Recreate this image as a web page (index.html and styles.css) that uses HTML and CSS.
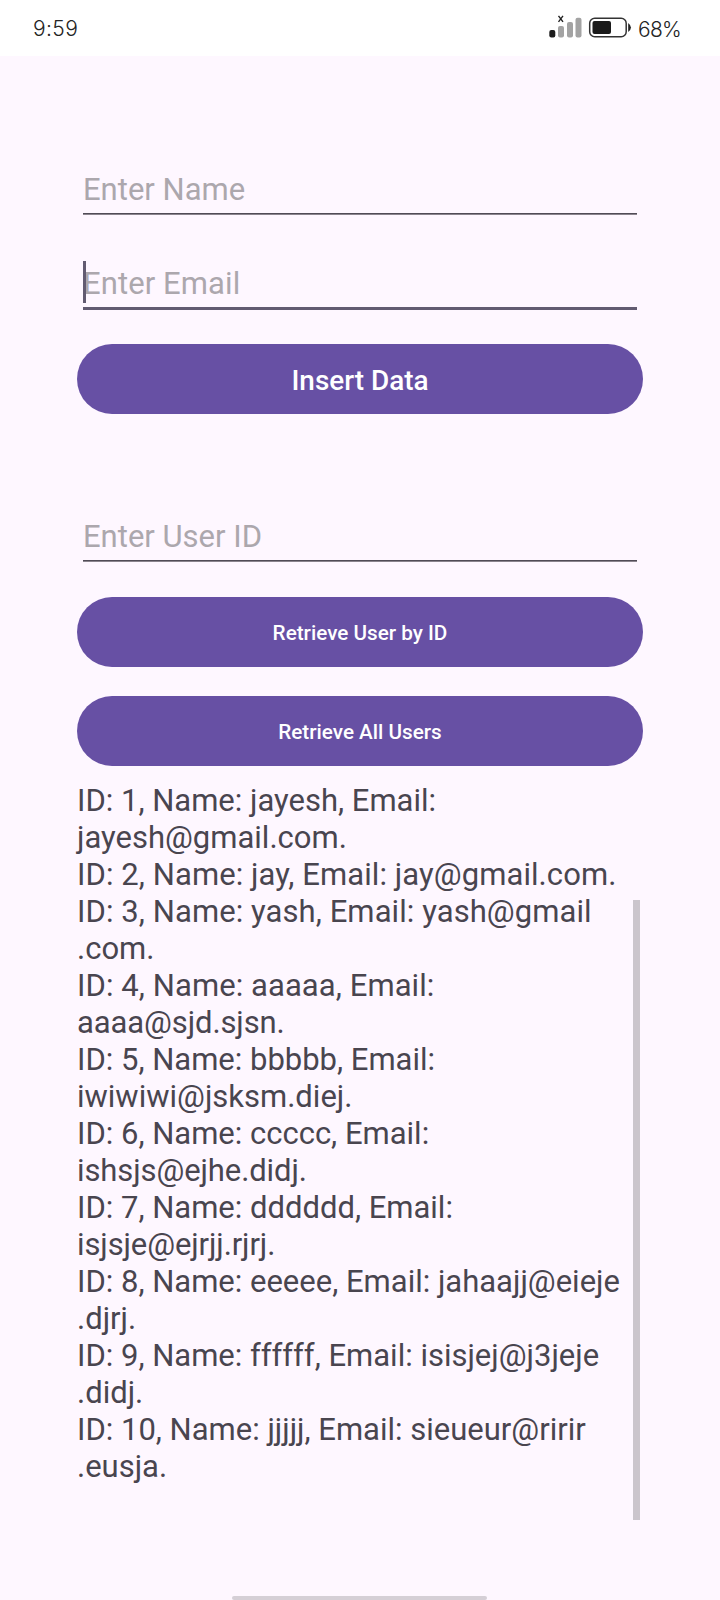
FILE: index.html
```html
<!DOCTYPE html>
<html lang="en"><head><meta charset="utf-8"><title>Users</title><link rel="stylesheet" href="styles.css"></head>
<body>
<header class="status"><span class="time">9:59</span>
<svg class="signals" width="84" height="28" viewBox="0 0 84 28"><path d="M10.500 1.800l4.500 6M15 1.800l-4.500 6" stroke="#222" stroke-width="1.400"/><rect x="1.300" y="16" width="6" height="7.500" rx="2" fill="#1c1c1c"/><g fill="#a3a3a3"><rect x="10" y="12" width="6" height="11.500" rx="2"/><rect x="19" y="8" width="6" height="15.500" rx="2"/><rect x="27.500" y="3.700" width="6" height="19.800" rx="2"/></g><rect x="41.700" y="4.300" width="36.500" height="18.500" rx="5" fill="none" stroke="#333" stroke-width="1.500"/><rect x="44.500" y="7" width="18.500" height="13" rx="2" fill="#1a1a1a"/><path d="M80.200 9q5.500 4.500 0 9z" fill="#222"/></svg>
<span class="percent">68%</span></header>
<main class="screen">
<div class="field name">Enter Name</div>
<div class="field email"><i class="caret"></i>Enter Email</div>
<button class="button insert">Insert Data</button>
<div class="field user-id">Enter User ID</div>
<button class="button by-id">Retrieve User by ID</button>
<button class="button all">Retrieve All Users</button>
<section class="results"><p class="list">ID: 1, Name: jayesh, Email:
jayesh@gmail.com.
<span class="wide">ID: 2, Name: jay, Email: jay@gmail.com.
ID: 3, Name: yash, Email: yash@gmail</span>
.com.
<span class="wide">ID: 4, Name: aaaaa, Email:</span>
<span class="tight">aaaa@sjd.sjsn.</span>
ID: 5, Name: bbbbb, Email:
iwiwiwi@jsksm.diej.
ID: 6, Name: ccccc, Email:
<span class="tight">ishsjs@ejhe.didj.</span>
ID: 7, Name: dddddd, Email:
<span class="tight">isjsje@ejrjj.rjrj.</span>
ID: 8, Name: eeeee, Email: jahaajj@eieje
.djrj.
ID: 9, Name: ffffff, Email: isisjej@j3jeje
.didj.
ID: 10, Name: jjjjj, Email: sieueur@ririr
.eusja.</p><div class="scrollbar"></div></section>
</main><footer class="home"></footer>
</body></html>
```
FILE: styles.css
```css
* { box-sizing: border-box; }
body { margin: 0; height: 1600px; display: flex; flex-direction: column; background: #fef7ff; font-family: Roboto, sans-serif; overflow: hidden; }
.status { height: 56px; flex: none; display: flex; align-items: flex-start; background: #fff; color: #242424; font: 300 21px/26px Inter, sans-serif; padding: 16px 0 0 33px; }
.time { letter-spacing: .4px; }
.signals { flex: none; margin: -2px 6px 0 auto; }
.percent { flex: none; width: 82px; padding-top: 1px; letter-spacing: -.7px; }
.screen { flex: 1; padding: 104px 77px 0; display: flex; flex-direction: column; }
.field { position: relative; height: 55px; flex: none; margin: 0 6px; padding-bottom: 2px; background: linear-gradient(#514c56 50%, #8b858e 50%) bottom / 100% 2px no-repeat; font-size: 31px; line-height: 59px; color: #aca7ad; }
.email { margin-top: 40px; line-height: 57px; background: none; border-bottom: 3px solid #625b71; letter-spacing: .1px; }
.caret { position: absolute; left: 0; top: 6px; width: 3px; height: 42px; background: #625b71; }
.button { height: 70px; flex: none; border: 0; border-radius: 35px; background: #6750a4; color: #fff; font: 500 20.7px Roboto, sans-serif; padding: 2px 0 0; }
.insert { margin-top: 34px; font-size: 27.9px; padding-top: 3px; }
.user-id { margin-top: 93px; }
.by-id { margin-top: 35px; }
.all { margin-top: 29px; }
.results { display: flex; justify-content: space-between; margin-top: 16px; height: 738px; padding-right: 3px; }
.list { margin: 0; white-space: pre; font-size: 31px; line-height: 37px; color: #49454f; }
.wide { letter-spacing: .08px; }
.tight { letter-spacing: -.1px; }
.scrollbar { width: 7px; height: 620px; align-self: flex-end; background: #cbc5cc; }
.home { width: 255px; height: 4px; margin: 0 0 0 232px; background: #d5cfd6; border-radius: 2px; }
```
